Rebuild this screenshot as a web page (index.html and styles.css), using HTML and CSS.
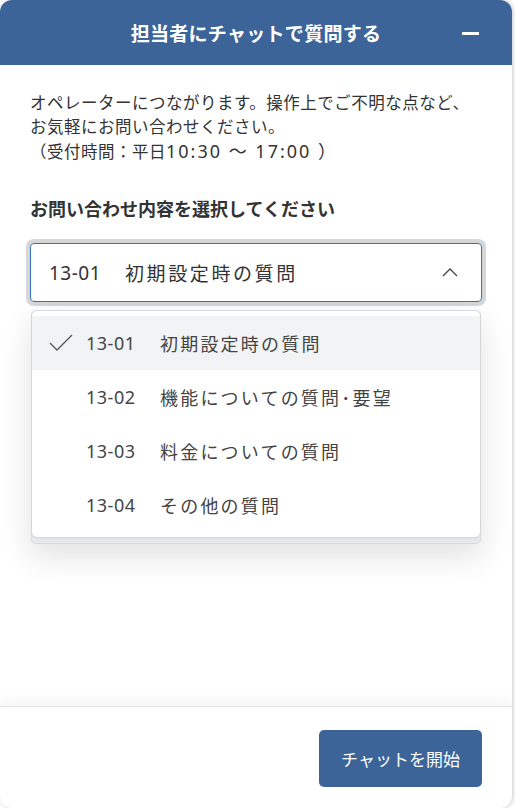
FILE: index.html
```html
<!DOCTYPE html>
<html lang="ja">
<head>
    <meta charset="UTF-8">
    <meta name="viewport" content="width=device-width, initial-scale=1.0">
    <title>担当者にチャットで質問する</title>
    <link rel="stylesheet" href="styles.css">
</head>
<body>
    <div class="panel">
        <header class="panel-head">
            <h1>担当者にチャットで質問する</h1>
            <button class="minimize" aria-label="最小化"><span></span></button>
        </header>

        <section class="panel-body">
            <p class="intro">オペレーターにつながります。操作上でご不明な点など、<br>お気軽にお問い合わせください。<br>（受付時間：平日<span class="hours">10:30 〜 17:00 ）</span></p>

            <p class="field-label">お問い合わせ内容を選択してください</p>

            <div class="select-wrap">
                <div class="select">
                    <span class="code">13-01</span>
                    <span class="name">初期設定時の質問</span>
                    <svg class="chevron" width="16" height="10" viewBox="0 0 16 10">
                        <polyline points="1,9 8,2 15,9" fill="none" stroke="#444" stroke-width="1.3"/>
                    </svg>
                </div>

                <div class="dropdown">
                    <ul class="options">
                        <li class="option selected">
                            <svg class="check" width="24" height="18" viewBox="0 0 24 18">
                                <polyline points="1,9 8,16 23,1" fill="none" stroke="#555" stroke-width="1.3"/>
                            </svg>
                            <span class="code">13-01</span><span class="name">初期設定時の質問</span>
                        </li>
                        <li class="option"><span class="code">13-02</span><span class="name">機能についての質問･要望</span></li>
                        <li class="option"><span class="code">13-03</span><span class="name">料金についての質問</span></li>
                        <li class="option"><span class="code">13-04</span><span class="name">その他の質問</span></li>
                    </ul>
                </div>
            </div>
        </section>

        <footer class="panel-foot">
            <button class="start">チャットを開始</button>
        </footer>
    </div>
</body>
</html>
```

FILE: styles.css
```css
body {
    margin: 0;
    padding: 0;
    background: #fff;
    font-family: "Noto Sans", "Noto Sans CJK JP", sans-serif;
    color: #333;
}
.panel {
    width: 512px;
    height: 808px;
    display: flex;
    flex-direction: column;
    background: #fff;
    border-radius: 12px;
    box-shadow: 1px 0 4px rgba(0, 0, 0, 0.22);
    overflow: hidden;
}
.panel-head {
    height: 65px;
    flex: none;
    background: #3c6499;
    color: #fff;
    display: flex;
    align-items: center;
    justify-content: center;
    position: relative;
}
.panel-head h1 {
    margin: 0;
    font-size: 19px;
    font-weight: 700;
    letter-spacing: 0.3px;
}
.minimize {
    position: absolute;
    right: 30px;
    top: 24px;
    width: 24px;
    height: 18px;
    border: 0;
    padding: 0;
    background: none;
    display: flex;
    align-items: center;
    justify-content: center;
}
.minimize span {
    display: block;
    width: 17px;
    height: 3px;
    background: #fff;
}
.panel-body {
    flex: 1;
    padding: 26px 30px 0;
}
.intro {
    margin: 0;
    font-size: 16.5px;
    line-height: 24px;
    letter-spacing: 0.5px;
}
.hours {
    font-size: 18px;
    letter-spacing: 2px;
}
.field-label {
    margin: 33px 0 0;
    font-size: 18px;
    font-weight: 700;
    line-height: 24px;
}
.select-wrap {
    position: relative;
    margin-top: 22px;
}
.select {
    height: 57px;
    border: 1px solid #3572b8;
    border-radius: 4px;
    box-shadow: 0 0 0 4px #d6d6d6;
    display: flex;
    align-items: center;
    padding: 0 23px 0 18px;
    font-size: 19px;
    color: #333;
}
.select .code {
    width: 76px;
    letter-spacing: 0.5px;
}
.select .name {
    flex: 1;
    letter-spacing: 2.6px;
}
.chevron {
    margin-top: -2px;
}
.dropdown {
    position: absolute;
    left: 1px;
    right: 1px;
    top: 67px;
    background: #e6eaeb;
    border: 1px solid #d8dcde;
    border-radius: 5px;
    padding-bottom: 6px;
    box-shadow: 0 12px 32px rgba(0, 0, 0, 0.12);
}
.options {
    list-style: none;
    margin: 0;
    padding: 5px 0 5px;
    background: #fff;
    border-radius: 5px;
    box-shadow: 0 1px 2px rgba(0, 0, 0, 0.1);
}
.option {
    height: 54px;
    display: flex;
    align-items: center;
    padding-left: 54px;
    font-size: 18px;
    color: #444;
    position: relative;
}
.option .code {
    width: 74px;
    letter-spacing: 0.5px;
}
.option .name {
    letter-spacing: 2.2px;
}
.option.selected {
    background: #f2f3f5;
}
.check {
    position: absolute;
    left: 17px;
    top: 18px;
}
.panel-foot {
    height: 102px;
    flex: none;
    border-top: 1px solid #e4e4e4;
    box-shadow: 0 -6px 12px rgba(0, 0, 0, 0.04);
    display: flex;
    justify-content: flex-end;
    align-items: flex-start;
    padding: 23px 30px 0 0;
    box-sizing: border-box;
}
.start {
    width: 163px;
    height: 57px;
    border: 0;
    border-radius: 5px;
    background: #3c6499;
    color: #fff;
    font-family: inherit;
    font-size: 17px;
}
```
